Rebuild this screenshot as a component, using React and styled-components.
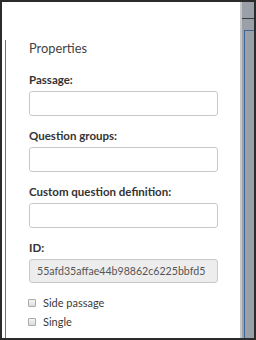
import React from 'react';
import styled, { createGlobalStyle } from 'styled-components';

const Global = createGlobalStyle`
    html, body { margin: 0; padding: 0; }
    body {
        width: 256px;
        height: 340px;
        overflow: hidden;
        font-family: Lato, "Open Sans", sans-serif;
        background: #2b2b2b;
    }
`;

const Frame = styled.div`
    box-sizing: border-box;
    width: 256px;
    height: 340px;
    padding: 2px;
    display: flex;
    background: #2b2b2b;
`;

const Panel = styled.div`
    width: 238px;
    background: #fff;
    display: flex;
    flex-direction: column;
`;

const Body = styled.div`
    margin: 38px 0 0 3px;
    flex: 1;
    border-left: 1px solid #a04cc8;
    padding: 0 0 0 23px;
    display: flex;
    flex-direction: column;
`;

const Title = styled.div`
    font-size: 12.8px;
    font-weight: 400;
    color: #444;
    line-height: 16px;
    margin: 0 0 17px;
`;

const Field = styled.div`
    display: flex;
    flex-direction: column;
    margin-bottom: 13px;
`;

const Label = styled.label`
    font-size: 11.5px;
    font-weight: 700;
    color: #333;
    line-height: 14px;
    margin-bottom: 4px;
`;

const Input = styled.div`
    box-sizing: border-box;
    width: 189px;
    height: ${p => (p.readOnly ? 24 : 25)}px;
    border: 1px solid #c9c9c9;
    border-radius: 3px;
    background: ${p => (p.readOnly ? '#ededed' : '#fff')};
    color: #555;
    font-size: 10.6px;
    line-height: 22px;
    padding: 0 7px;
    white-space: nowrap;
    overflow: hidden;
`;

const Checks = styled.div`
    margin-top: -3px;
    display: flex;
    flex-direction: column;
`;

const Check = styled.div`
    display: flex;
    align-items: center;
    gap: 7px;
    height: 19px;
    font-size: 11px;
    color: #3a3a3a;
    margin-left: -1px;
`;

const Box = styled.span`
    box-sizing: border-box;
    width: 8px;
    height: 8px;
    border: 1px solid #aaa;
    border-radius: 1px;
    background: linear-gradient(#f4f4f4, #dcdcdc);
`;

const Side = styled.div`
    flex: 1;
    display: flex;
    flex-direction: column;
    background: #9ba0a8;
    border-left: 2px solid #c4c6ca;
`;

const SideTop = styled.div`
    height: 16px;
    border-bottom: 1px solid #3a3d44;
`;

const SideGap = styled.div`
    height: 11px;
`;

const SideBox = styled.div`
    flex: 1;
    margin-left: 2px;
    border-left: 1px solid #3f6796;
    border-top: 1px solid #3f6796;
`;

export default function App() {
    return (
        <>
            <Global />
            <Frame>
                <Panel>
                    <Body>
                        <Title>Properties</Title>
                        <Field>
                            <Label>Passage:</Label>
                            <Input />
                        </Field>
                        <Field>
                            <Label>Question groups:</Label>
                            <Input />
                        </Field>
                        <Field>
                            <Label>Custom question definition:</Label>
                            <Input />
                        </Field>
                        <Field>
                            <Label>ID:</Label>
                            <Input readOnly>55afd35affae44b98862c6225bbfd5</Input>
                        </Field>
                        <Checks>
                            <Check><Box />Side passage</Check>
                            <Check><Box />Single</Check>
                        </Checks>
                    </Body>
                </Panel>
                <Side>
                    <SideTop />
                    <SideGap />
                    <SideBox />
                </Side>
            </Frame>
        </>
    );
}
